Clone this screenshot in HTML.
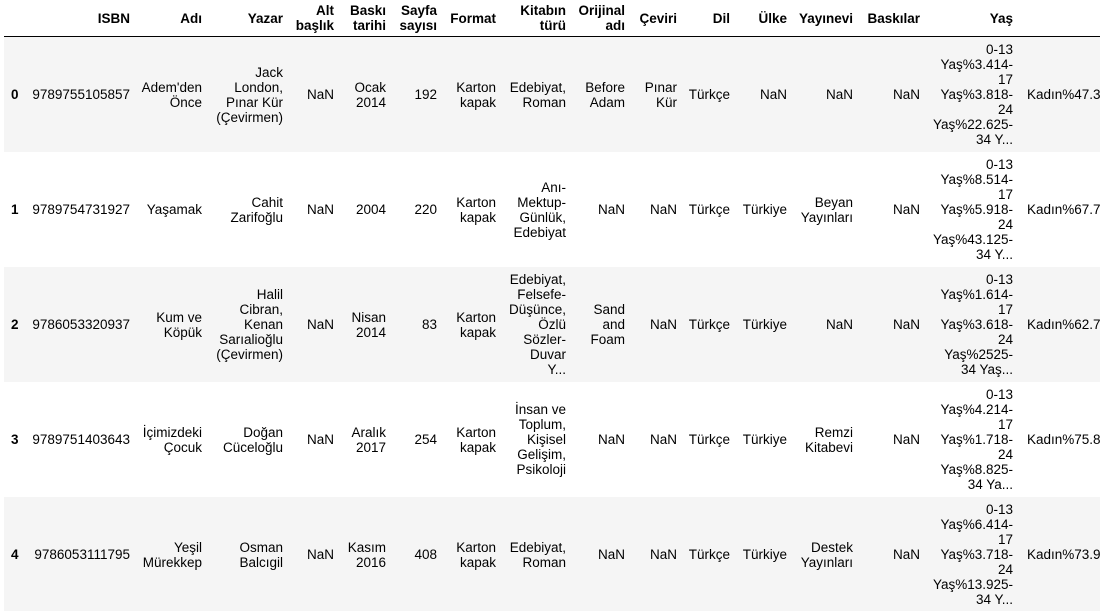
<!DOCTYPE html>
<html><head><meta charset="utf-8"><style>
body{margin:0;width:1108px;height:611px;overflow:hidden;background:#fff;font-family:"Liberation Sans",Arial,sans-serif;font-size:13.5px;color:#000;}
.wrap{position:absolute;left:4px;top:0;width:1096px;height:611px;overflow:hidden;}
.hdr{position:absolute;left:0;top:0;width:1096px;height:36px;border-bottom:1px solid #000;}
.row{position:absolute;left:0;width:1096px;height:115px;}
.g{background:#f5f5f5;}
.c{position:absolute;top:0;height:100%;display:flex;align-items:center;justify-content:flex-end;text-align:right;line-height:15px;white-space:nowrap;}
.hdr .c{font-weight:bold;}
.i{font-weight:bold;}
</style></head><body><div class="wrap">
<div class="hdr">
<div class="c" style="right:970px">ISBN</div>
<div class="c" style="right:898px">Adı</div>
<div class="c" style="right:817px">Yazar</div>
<div class="c" style="right:766px">Alt<br>başlık</div>
<div class="c" style="right:714px">Baskı<br>tarihi</div>
<div class="c" style="right:663px">Sayfa<br>sayısı</div>
<div class="c" style="right:604px">Format</div>
<div class="c" style="right:534px">Kitabın<br>türü</div>
<div class="c" style="right:475px">Orijinal<br>adı</div>
<div class="c" style="right:423px">Çeviri</div>
<div class="c" style="right:370px">Dil</div>
<div class="c" style="right:313px">Ülke</div>
<div class="c" style="right:247px">Yayınevi</div>
<div class="c" style="right:180px">Baskılar</div>
<div class="c" style="right:87px">Yaş</div>
</div>
<div class="row g" style="top:37px">
<div class="c i" style="left:7px">0</div>
<div class="c" style="right:970px">9789755105857</div>
<div class="c" style="right:898px">Adem'den<br>Önce</div>
<div class="c" style="right:817px">Jack<br>London,<br>Pınar Kür<br>(Çevirmen)</div>
<div class="c" style="right:766px">NaN</div>
<div class="c" style="right:714px">Ocak<br>2014</div>
<div class="c" style="right:663px">192</div>
<div class="c" style="right:604px">Karton<br>kapak</div>
<div class="c" style="right:534px">Edebiyat,<br>Roman</div>
<div class="c" style="right:475px">Before<br>Adam</div>
<div class="c" style="right:423px">Pınar<br>Kür</div>
<div class="c" style="right:370px">Türkçe</div>
<div class="c" style="right:313px">NaN</div>
<div class="c" style="right:247px">NaN</div>
<div class="c" style="right:180px">NaN</div>
<div class="c" style="right:87px">0-13<br>Yaş%3.414-<br>17<br>Yaş%3.818-<br>24<br>Yaş%22.625-<br>34 Y...</div>
<div class="c" style="left:1023px">Kadın%47.3</div>
</div>
<div class="row" style="top:152px">
<div class="c i" style="left:7px">1</div>
<div class="c" style="right:970px">9789754731927</div>
<div class="c" style="right:898px">Yaşamak</div>
<div class="c" style="right:817px">Cahit<br>Zarifoğlu</div>
<div class="c" style="right:766px">NaN</div>
<div class="c" style="right:714px">2004</div>
<div class="c" style="right:663px">220</div>
<div class="c" style="right:604px">Karton<br>kapak</div>
<div class="c" style="right:534px">Anı-<br>Mektup-<br>Günlük,<br>Edebiyat</div>
<div class="c" style="right:475px">NaN</div>
<div class="c" style="right:423px">NaN</div>
<div class="c" style="right:370px">Türkçe</div>
<div class="c" style="right:313px">Türkiye</div>
<div class="c" style="right:247px">Beyan<br>Yayınları</div>
<div class="c" style="right:180px">NaN</div>
<div class="c" style="right:87px">0-13<br>Yaş%8.514-<br>17<br>Yaş%5.918-<br>24<br>Yaş%43.125-<br>34 Y...</div>
<div class="c" style="left:1023px">Kadın%67.7</div>
</div>
<div class="row g" style="top:267px">
<div class="c i" style="left:7px">2</div>
<div class="c" style="right:970px">9786053320937</div>
<div class="c" style="right:898px">Kum ve<br>Köpük</div>
<div class="c" style="right:817px">Halil<br>Cibran,<br>Kenan<br>Sarıalioğlu<br>(Çevirmen)</div>
<div class="c" style="right:766px">NaN</div>
<div class="c" style="right:714px">Nisan<br>2014</div>
<div class="c" style="right:663px">83</div>
<div class="c" style="right:604px">Karton<br>kapak</div>
<div class="c" style="right:534px">Edebiyat,<br>Felsefe-<br>Düşünce,<br>Özlü<br>Sözler-<br>Duvar<br>Y...</div>
<div class="c" style="right:475px">Sand<br>and<br>Foam</div>
<div class="c" style="right:423px">NaN</div>
<div class="c" style="right:370px">Türkçe</div>
<div class="c" style="right:313px">Türkiye</div>
<div class="c" style="right:247px">NaN</div>
<div class="c" style="right:180px">NaN</div>
<div class="c" style="right:87px">0-13<br>Yaş%1.614-<br>17<br>Yaş%3.618-<br>24<br>Yaş%2525-<br>34 Yaş...</div>
<div class="c" style="left:1023px">Kadın%62.7</div>
</div>
<div class="row" style="top:382px">
<div class="c i" style="left:7px">3</div>
<div class="c" style="right:970px">9789751403643</div>
<div class="c" style="right:898px">İçimizdeki<br>Çocuk</div>
<div class="c" style="right:817px">Doğan<br>Cüceloğlu</div>
<div class="c" style="right:766px">NaN</div>
<div class="c" style="right:714px">Aralık<br>2017</div>
<div class="c" style="right:663px">254</div>
<div class="c" style="right:604px">Karton<br>kapak</div>
<div class="c" style="right:534px">İnsan ve<br>Toplum,<br>Kişisel<br>Gelişim,<br>Psikoloji</div>
<div class="c" style="right:475px">NaN</div>
<div class="c" style="right:423px">NaN</div>
<div class="c" style="right:370px">Türkçe</div>
<div class="c" style="right:313px">Türkiye</div>
<div class="c" style="right:247px">Remzi<br>Kitabevi</div>
<div class="c" style="right:180px">NaN</div>
<div class="c" style="right:87px">0-13<br>Yaş%4.214-<br>17<br>Yaş%1.718-<br>24<br>Yaş%8.825-<br>34 Ya...</div>
<div class="c" style="left:1023px">Kadın%75.8</div>
</div>
<div class="row g" style="top:497px">
<div class="c i" style="left:7px">4</div>
<div class="c" style="right:970px">9786053111795</div>
<div class="c" style="right:898px">Yeşil<br>Mürekkep</div>
<div class="c" style="right:817px">Osman<br>Balcıgil</div>
<div class="c" style="right:766px">NaN</div>
<div class="c" style="right:714px">Kasım<br>2016</div>
<div class="c" style="right:663px">408</div>
<div class="c" style="right:604px">Karton<br>kapak</div>
<div class="c" style="right:534px">Edebiyat,<br>Roman</div>
<div class="c" style="right:475px">NaN</div>
<div class="c" style="right:423px">NaN</div>
<div class="c" style="right:370px">Türkçe</div>
<div class="c" style="right:313px">Türkiye</div>
<div class="c" style="right:247px">Destek<br>Yayınları</div>
<div class="c" style="right:180px">NaN</div>
<div class="c" style="right:87px">0-13<br>Yaş%6.414-<br>17<br>Yaş%3.718-<br>24<br>Yaş%13.925-<br>34 Y...</div>
<div class="c" style="left:1023px">Kadın%73.9</div>
</div>
</div></body></html>
